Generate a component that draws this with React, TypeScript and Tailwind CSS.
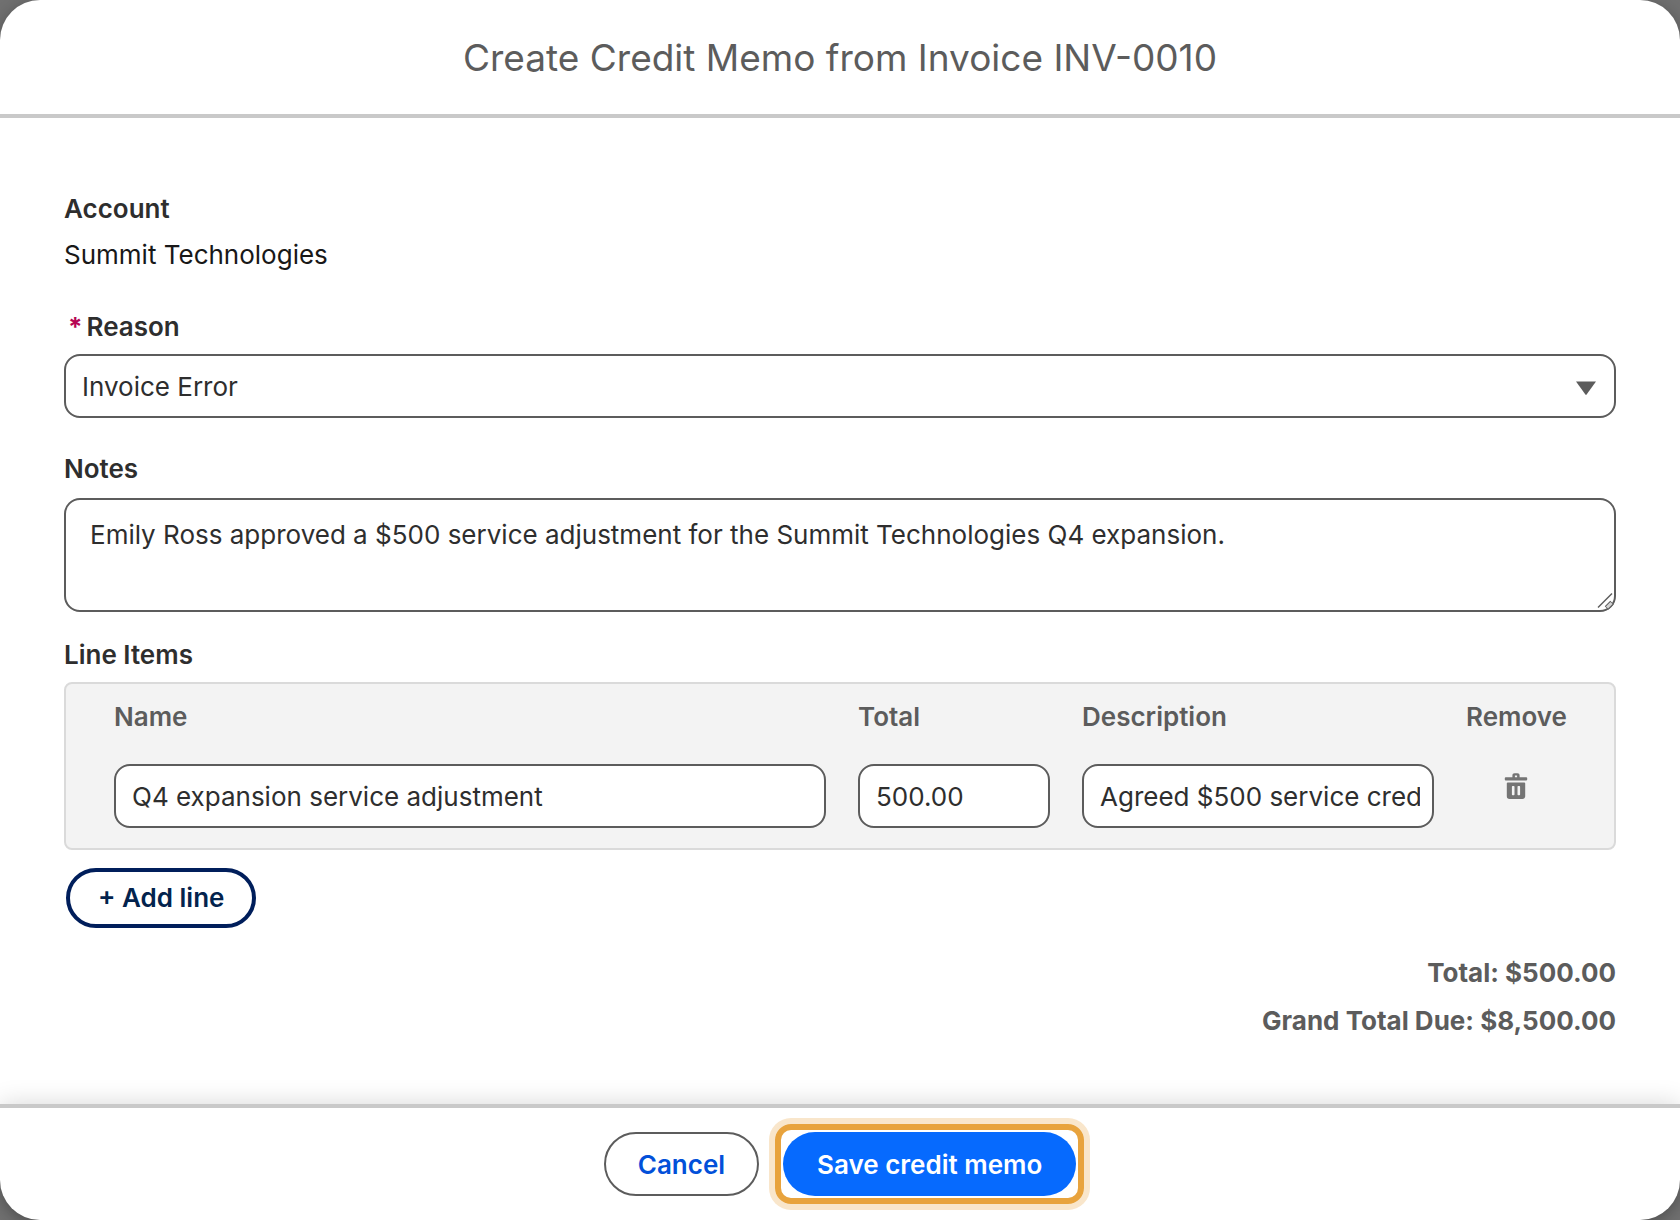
import { useState } from "react";

const label = "text-[26px] leading-9 font-semibold text-[#2e2e2e]";
const control = "w-full rounded-2xl border-2 border-[#5c5c5c] bg-white text-[26px] text-[#2e2e2e]";
const columnHead = "px-4 text-[26px] leading-9 font-semibold text-[#5c5c5c]";

function TrashIcon() {
  return (
    <svg viewBox="0 0 24 28" className="h-7 w-6" fill="#747474" aria-hidden="true">
      <path
        fillRule="evenodd"
        d="M1.7 5.2h6.7V3.4C8.4 2 9.2 1.2 10.6 1.2h2.8c1.4 0 2.2.8 2.2 2.2v1.8h6.7c.5 0 .9.4.9.9v1.5c0 .5-.4.9-.9.9H1.7a.9.9 0 0 1-.9-.9V6.1c0-.5.4-.9.9-.9ZM10.9 5.2h2.2V3.5h-2.2v1.7Z"
      />
      <path
        fillRule="evenodd"
        d="M3.7 10.4h16.6c.5 0 .9.4.9.9v12.9c0 1.6-1.2 2.8-2.8 2.8H5.6A2.8 2.8 0 0 1 2.8 24.2V11.3c0-.5.4-.9.9-.9ZM8.6 14a.7.7 0 0 0-.7.7v7.9c0 .4.3.7.7.7h1.2c.4 0 .7-.3.7-.7v-7.9a.7.7 0 0 0-.7-.7H8.6Zm5.6 0a.7.7 0 0 0-.7.7v7.9c0 .4.3.7.7.7h1.2c.4 0 .7-.3.7-.7v-7.9a.7.7 0 0 0-.7-.7h-1.2Z"
      />
    </svg>
  );
}

function ResizeGrip() {
  return (
    <svg
      viewBox="0 0 18 18"
      className="pointer-events-none absolute right-[2px] bottom-[2px] h-[18px] w-[18px]"
      fill="none"
      stroke="#5c5c5c"
      strokeWidth="1.5"
      aria-hidden="true"
    >
      <path d="M2 15.5 16 1.5" />
      <path d="M10.5 16 16 10.5" stroke="#5c5c5c" strokeWidth="5" />
      <path d="M11 15.5 15.5 11" stroke="#d4d4d4" strokeWidth="3" />
    </svg>
  );
}

export default function App() {
  const [reason, setReason] = useState("Invoice Error");

  return (
    <div className="min-h-screen bg-[#707070] font-[Inter,sans-serif]">
      <main
        role="dialog"
        aria-labelledby="dialog-title"
        className="flex min-h-screen flex-col overflow-hidden rounded-[40px] bg-white shadow-[0_4px_16px_rgba(0,0,0,0.3)]"
      >
        <header className="border-b-4 border-[#c9c9c9] px-16 pt-[34px] pb-8 text-center">
          <h1 id="dialog-title" className="text-[37px] leading-[48px] font-normal text-[#5c5c5c]">
            Create Credit Memo from Invoice INV-0010
          </h1>
        </header>

        <form id="memo-form" className="flex flex-1 flex-col px-16 pt-[73px]">
          <dl>
            <dt className={label}>Account</dt>
            <dd className="mt-[10px] text-[26px] leading-9 text-[#181818]">Summit Technologies</dd>
          </dl>

          <div className="mt-9">
            <label htmlFor="reason" className={`flex gap-1 pl-1 ${label}`}>
              <span className="font-bold text-[#b60554]" aria-hidden="true">*</span>
              Reason
            </label>
            <div className="relative mt-[9px]">
              <select
                id="reason"
                required
                value={reason}
                onChange={(e) => setReason(e.target.value)}
                className={`h-16 appearance-none px-4 ${control}`}
              >
                <option>Invoice Error</option>
              </select>
              <svg
                viewBox="0 0 20 14"
                className="pointer-events-none absolute top-[27px] right-5 h-[14px] w-5"
                fill="#5c5c5c"
                aria-hidden="true"
              >
                <path d="M0 .5h20L10.6 13.5q-.6.8-1.2 0Z" />
              </svg>
            </div>
          </div>

          <div className="mt-[33px]">
            <label htmlFor="notes" className={`block ${label}`}>Notes</label>
            <div className="relative mt-[11px]">
              <textarea
                id="notes"
                className={`block h-[114px] resize-y px-6 py-[17px] leading-9 [&::-webkit-resizer]:hidden ${control}`}
                defaultValue="Emily Ross approved a $500 service adjustment for the Summit Technologies Q4 expansion."
              />
              <ResizeGrip />
            </div>
          </div>

          <section className="mt-[25px]">
            <h2 id="line-items" className={label}>Line Items</h2>
            <div className="mt-[9px] rounded-lg border-2 border-[#dadada] bg-[#f3f3f3] px-8 pt-[15px] pb-5">
              <table className="w-full table-fixed text-left" aria-labelledby="line-items">
                <thead>
                  <tr>
                    <th className={columnHead}>Name</th>
                    <th className={`w-[224px] ${columnHead}`}>Total</th>
                    <th className={`w-[384px] ${columnHead}`}>Description</th>
                    <th className={`w-[132px] ${columnHead}`}>Remove</th>
                  </tr>
                </thead>
                <tbody>
                  <tr>
                    <td className="px-4 pt-[29px]">
                      <input
                        aria-label="Name"
                        className={`block h-16 px-4 ${control}`}
                        defaultValue="Q4 expansion service adjustment"
                      />
                    </td>
                    <td className="px-4 pt-[29px]">
                      <input aria-label="Total" className={`block h-16 px-4 ${control}`} defaultValue="500.00" />
                    </td>
                    <td className="px-4 pt-[29px]">
                      <input
                        aria-label="Description"
                        className={`block h-16 pr-3 pl-4 ${control}`}
                        defaultValue="Agreed $500 service credit"
                      />
                    </td>
                    <td className="px-4 pt-[37px] align-top">
                      <button type="button" aria-label="Remove line" className="mx-auto block">
                        <TrashIcon />
                      </button>
                    </td>
                  </tr>
                </tbody>
              </table>
            </div>
            <button
              type="button"
              className="mt-[18px] ml-[2px] block h-[60px] rounded-full border-4 border-[#001e5b] px-7 text-[26px] leading-9 font-semibold text-[#03234d]"
            >
              + Add line
            </button>
          </section>

          <div className="mt-[21px] pb-[59px] text-right text-[26px] leading-[48px] font-bold text-[#5c5c5c]">
            <p>Total: $500.00</p>
            <p>Grand Total Due: $8,500.00</p>
          </div>
        </form>

        <footer className="flex justify-center gap-6 border-t-4 border-[#c9c9c9] py-6 shadow-[0_0_24px_rgba(0,0,0,0.16)]">
          <button
            type="button"
            className="h-16 rounded-full border-2 border-[#5c5c5c] px-8 text-[26px] font-semibold text-[#0250d9]"
          >
            Cancel
          </button>
          <div className="-m-2 rounded-2xl border-6 border-[#e8a33d] p-[2px] shadow-[0_0_0_6px_#f9e6cb]">
            <button
              type="submit"
              form="memo-form"
              className="h-16 rounded-full bg-[#066afe] px-[34px] text-[26px] font-semibold text-white"
            >
              Save credit memo
            </button>
          </div>
        </footer>
      </main>
    </div>
  );
}
